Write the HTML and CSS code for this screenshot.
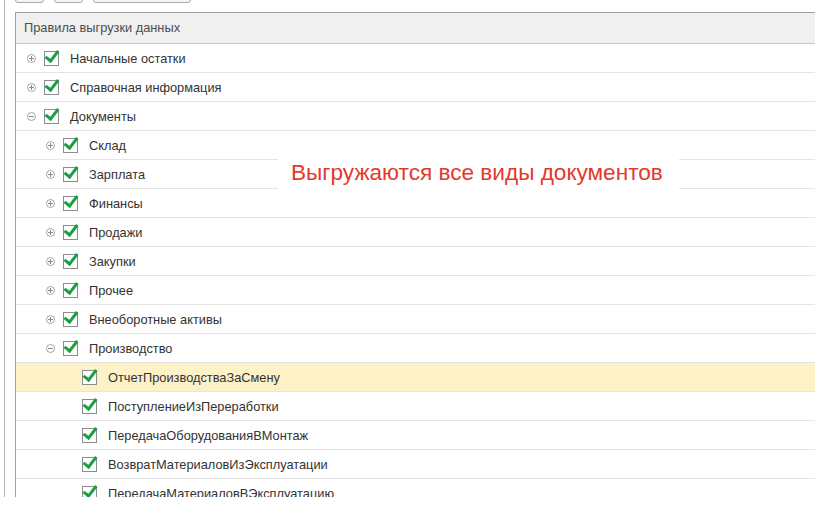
FILE: index.html
```html
<!DOCTYPE html>
<html lang="ru">
  <head>
    <meta charset="UTF-8" />
    <title>Правила выгрузки данных</title>
    <link rel="stylesheet" href="styles.css">
  </head>
  <body>
    <div class="panel">
      <!-- панель кнопок (видна только нижняя кромка) -->
      <div class="toolbar">
        <span class="btn"></span>
        <span class="btn"></span>
        <span class="btn wide"></span>
      </div>

      <div class="tree">
        <div class="tree-head">Правила выгрузки данных</div>

        <div class="row lv0"><span class="tg plus"></span><span class="cb"></span><span class="txt">Начальные остатки</span></div>
        <div class="row lv0"><span class="tg plus"></span><span class="cb"></span><span class="txt">Справочная информация</span></div>
        <div class="row lv0"><span class="tg minus"></span><span class="cb"></span><span class="txt">Документы</span></div>
        <div class="row lv1"><span class="tg plus"></span><span class="cb"></span><span class="txt">Склад</span></div>
        <div class="row lv1"><span class="tg plus"></span><span class="cb"></span><span class="txt">Зарплата</span></div>
        <div class="row lv1"><span class="tg plus"></span><span class="cb"></span><span class="txt">Финансы</span></div>
        <div class="row lv1"><span class="tg plus"></span><span class="cb"></span><span class="txt">Продажи</span></div>
        <div class="row lv1"><span class="tg plus"></span><span class="cb"></span><span class="txt">Закупки</span></div>
        <div class="row lv1"><span class="tg plus"></span><span class="cb"></span><span class="txt">Прочее</span></div>
        <div class="row lv1"><span class="tg plus"></span><span class="cb"></span><span class="txt">Внеоборотные активы</span></div>
        <div class="row lv1"><span class="tg minus"></span><span class="cb"></span><span class="txt">Производство</span></div>
        <div class="row lv2 cur"><span class="tg"></span><span class="cb"></span><span class="txt">ОтчетПроизводстваЗаСмену</span></div>
        <div class="row lv2"><span class="tg"></span><span class="cb"></span><span class="txt">ПоступлениеИзПереработки</span></div>
        <div class="row lv2"><span class="tg"></span><span class="cb"></span><span class="txt">ПередачаОборудованияВМонтаж</span></div>
        <div class="row lv2"><span class="tg"></span><span class="cb"></span><span class="txt">ВозвратМатериаловИзЭксплуатации</span></div>
        <div class="row lv2"><span class="tg"></span><span class="cb"></span><span class="txt">ПередачаМатериаловВЭксплуатацию</span></div>

        <!-- выноска поверх дерева -->
        <div class="note">Выгружаются все виды документов</div>
      </div>
    </div>
  </body>
</html>
```

FILE: styles.css
```css
html, body{
  margin: 0;
  padding: 0;
  background: #fff;
}

body{
  font-family: "Liberation Sans", Arial, sans-serif;
}

/* внешняя панель с линией слева */
.panel{
  margin-left: 4px;
  border-left: 1px solid #b4b4b4;
  padding-left: 10px;
  height: 497px;
  overflow: hidden;
}

/* кнопки - видна только нижняя часть */
.toolbar{
  display: flex;
  gap: 10px;
  margin-top: -19px;
  height: 22px;
  margin-bottom: 9px;
}

.btn{
  width: 27px;
  height: 20px;
  border: 1px solid #a9a9a9;
  border-radius: 3px;
  background: #f4f4f4;
}

.btn.wide{
  width: 96px;
}

/* дерево */
.tree{
  position: relative;
  width: 1000px;
  border-left: 1px solid #a0a0a0;
  border-top: 1px solid #a0a0a0;
}

.tree-head{
  height: 30px;
  line-height: 29px;
  padding-left: 8px;
  background: #f0f0f0;
  border-bottom: 1px solid #c8c8c8;
  font-size: 12.8px;
  color: #4d4d4d;
}

.row{
  display: flex;
  align-items: center;
  height: 28px;
  border-bottom: 1px solid #e4e4e4;
  font-size: 12.8px;
  color: #333;
}

.lv0{ padding-left: 11px; }
.lv1{ padding-left: 30px; }
.lv2{ padding-left: 49px; }

.row.cur{
  background: #fdf1c8;
}

/* значок раскрытия */
.tg{
  position: relative;
  width: 9px;
  height: 9px;
  margin-right: 8px;
  box-sizing: border-box;
  flex: none;
}

.tg.plus, .tg.minus{
  border: 1px solid #a6a6a6;
  border-radius: 50%;
}

.tg.plus::before, .tg.minus::before{
  content: '';
  position: absolute;
  left: 1px;
  right: 1px;
  top: 3px;
  height: 1px;
  background: #8a8a8a;
}

.tg.plus::after{
  content: '';
  position: absolute;
  top: 1px;
  bottom: 1px;
  left: 3px;
  width: 1px;
  background: #8a8a8a;
}

/* флажок */
.cb{
  position: relative;
  width: 15px;
  height: 15px;
  margin-right: 11px;
  box-sizing: border-box;
  border: 1px solid #8c8c8c;
  background: #fff;
  flex: none;
}

.cb::after{
  content: '';
  position: absolute;
  left: 3px;
  top: -4px;
  width: 5px;
  height: 11px;
  border-right: 3px solid #1c9e44;
  border-bottom: 3px solid #1c9e44;
  transform: rotate(38deg);
  transform-origin: 50% 50%;
}

.txt{
  white-space: nowrap;
}

/* красная выноска */
.note{
  position: absolute;
  left: 262px;
  top: 143px;
  width: 388px;
  height: 35px;
  padding-left: 13px;
  background: #fff;
  color: #e3392d;
  font-size: 22.6px;
  line-height: 34px;
}
```
